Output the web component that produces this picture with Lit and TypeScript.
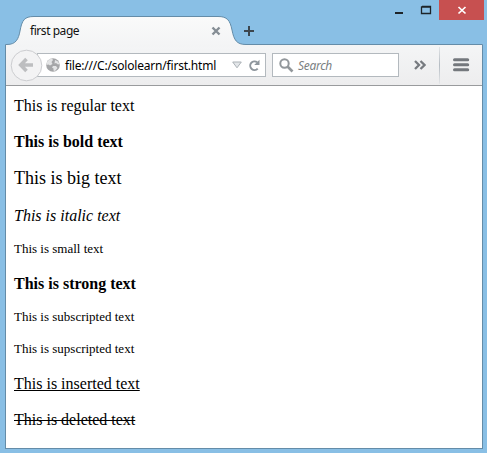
import { LitElement, html, css } from "lit";
import { customElement } from "lit/decorators.js";

@customElement("browser-tabs")
class BrowserTabs extends LitElement {
  static styles = css`
    :host { display: block; position: relative; height: 45px; z-index: 1; }
    .shape { position: absolute; left: 0; top: 0; display: block; }
    .row { position: relative; display: flex; align-items: center; height: 46px; padding: 16px 0 0 30px; box-sizing: border-box; }
    .title { width: 181px; font: 12px/16px "Noto Sans", sans-serif; letter-spacing: -0.45px; color: #111; }
    .plus { margin-left: 23px; }
    .close { flex: none; }
    .controls { position: absolute; right: 3px; top: 0; display: flex; height: 20px; }
    .controls svg { display: block; }
    .exit { background: #c75050; width: 45px; height: 20px; }
  `;
  render() {
    return html`
      <svg class="shape" width="487" height="47" viewBox="0 0 487 47">
        <defs>
          <linearGradient id="tab" x1="0" y1="0" x2="0" y2="1">
            <stop offset="0" stop-color="#fafafa" /><stop offset="1" stop-color="#f3f4f5" />
          </linearGradient>
        </defs>
        <path d="M5.5 47V44.5H7C16 44.5 18.5 39 20 31C22 20 24.500 16.500 34 16.500H218C227 16.500 230 20 232 30C234 40 236.500 44.500 246 44.500H482.500V47Z" fill="url(#tab)" />
        <path d="M5.5 47V44.5H7C16 44.5 18.5 39 20 31C22 20 24.500 16.500 34 16.500H218C227 16.500 230 20 232 30C234 40 236.500 44.500 246 44.500H482.500V47" fill="none" stroke="#648ca8" />
      </svg>
      <div class="row">
        <span class="title">first page</span>
        <svg class="close" width="10" height="10" viewBox="0 0 10 10"><path d="M1.500 1.500L8.500 8.500M8.500 1.500L1.500 8.500" stroke="#858d94" stroke-width="2.400" /></svg>
        <svg class="plus" width="10" height="10" viewBox="0 0 10 10"><path d="M5 0V10M0 5H10" stroke="#3c464e" stroke-width="2" /></svg>
      </div>
      <div class="controls">
        <svg width="44" height="20" viewBox="0 0 44 20"><path d="M0 13H8" stroke="#1d2429" stroke-width="2" /><path d="M27 6.500H35.500V13.500H26.500V6.500M26 7H36" fill="none" stroke="#1d2429" stroke-width="1.300" /></svg>
        <svg class="exit" viewBox="0 0 45 20"><path d="M19.500 7L26.500 13.500M26.500 7L19.500 13.500" stroke="#fff" stroke-width="1.700" /></svg>
      </div>
    `;
  }
}

@customElement("browser-toolbar")
class BrowserToolbar extends LitElement {
  static styles = css`
    :host { display: flex; align-items: center; height: 41px; box-sizing: border-box; border-bottom: 1px solid #999b9d; background: linear-gradient(#f4f5f6, #ededee); font: 12px/16px "Noto Sans", sans-serif; }
    svg { display: block; flex: none; }
    .back { margin-left: 4px; z-index: 1; }
    .field { display: flex; align-items: center; flex: none; height: 24px; box-sizing: border-box; border: 1px solid #b3b9be; background: #fff; }
    .address { width: 229px; margin-left: -6px; padding-left: 8px; }
    .url { flex: none; width: 167px; margin-left: 5px; padding-top: 1px; color: #000; white-space: nowrap; letter-spacing: -0.2px; }
    .reload { margin-left: 6px; }
    .search { width: 127px; margin-left: 6px; padding-left: 6px; }
    .hint { margin-left: 4px; padding-top: 1px; font-style: italic; color: #7b7f83; letter-spacing: -0.3px; }
    .more { margin-left: 15px; }
    .rule { width: 1px; height: 38px; margin-left: 13px; background: linear-gradient(#e4e6e8, #b5bcc3, #e4e6e8); }
    .menu { margin-left: 13px; }
  `;
  render() {
    return html`
      <svg class="back" width="33" height="33" viewBox="0 0 33 33">
        <circle cx="16.500" cy="16.500" r="15.300" fill="#f3f3f4" stroke="#cccdd0" />
        <path d="M10.500 16H23M16.500 10L10.700 16L16.500 22" fill="none" stroke="#bdbec0" stroke-width="3.600" />
      </svg>
      <div class="field address">
        <svg width="14" height="14" viewBox="0 0 14 14">
          <circle cx="7" cy="7" r="6.800" fill="#a5a6a8" />
          <path d="M1 4L3 1.500L6 .5L7 2L5.500 4L6.500 6L4 7.500L2.500 6.500L.5 7ZM9 2L12 3.500L13.500 6L12 6.500L10 5L8.500 5.500ZM7 8L10 8L11.500 10L9 13L7.500 12.500L7.500 10.500L6 9.500Z" fill="#e3e4e5" />
        </svg>
        <span class="url">file:///C:/sololearn/first.html</span>
        <svg width="10" height="8" viewBox="0 0 10 8"><path d="M.7 1H9.300L5 6.800Z" fill="#e3e6e9" stroke="#abb1b6" /></svg>
        <svg class="reload" width="13" height="13" viewBox="0 0 13 13"><path d="M9.700 9.600A4.300 4.300 0 1 1 9.200 3.300" fill="none" stroke="#8e969d" stroke-width="2" /><path d="M11.500 .8V6H6.200Z" fill="#8e969d" /></svg>
      </div>
      <div class="field search">
        <svg width="15" height="15" viewBox="0 0 15 15"><circle cx="5.500" cy="5.500" r="4.200" fill="none" stroke="#92979b" stroke-width="2" /><path d="M8.500 8.500L13.500 13.500" stroke="#92979b" stroke-width="2.600" /></svg>
        <span class="hint">Search</span>
      </div>
      <svg class="more" width="12" height="10" viewBox="0 0 12 10"><path d="M1 1L5 5L1 9M6.500 1L10.500 5L6.500 9" fill="none" stroke="#777b80" stroke-width="2.300" /></svg>
      <div class="rule"></div>
      <svg class="menu" width="17" height="14" viewBox="0 0 17 14"><path d="M1.500 1.700H14.700M1.500 6.700H14.700M1.500 11.700H14.700" stroke="#74787d" stroke-width="3" stroke-linecap="round" /></svg>
    `;
  }
}

@customElement("app-root")
class AppRoot extends LitElement {
  static styles = css`
    :host { display: block; width: 487px; height: 453px; background: #89bfe5; overflow: hidden; }
    .window { margin: 0 4px 0 5px; height: 404px; box-sizing: border-box; border: 1px solid #648ca8; border-top: 0; background: #fff; }
    .page { padding: 10px 0 0 8px; font: 16px/20px "Liberation Serif", serif; color: #000; }
    p { margin: 0 0 16px; height: 20px; white-space: nowrap; }
    .bold { font-weight: bold; }
    .big { font-size: 18px; margin-bottom: 18px; }
    .italic { font-style: italic; margin-bottom: 13px; }
    .small { font-size: 13px; margin-bottom: 15px; }
    .strong { font-weight: bold; margin-bottom: 13px; }
    .sub { margin-bottom: 12px; }
    .inserted { text-decoration: underline; }
    .deleted { text-decoration: line-through; }
  `;
  render() {
    return html`
      <browser-tabs></browser-tabs>
      <div class="window">
        <browser-toolbar></browser-toolbar>
        <div class="page">
          <p>This is regular text</p>
          <p class="bold">This is bold text</p>
          <p class="big">This is big text</p>
          <p class="italic">This is italic text</p>
          <p class="small">This is small text</p>
          <p class="strong">This is strong text</p>
          <p class="small sub">This is subscripted text</p>
          <p class="small">This is supscripted text</p>
          <p class="inserted">This is inserted text</p>
          <p class="deleted">This is deleted text</p>
        </div>
      </div>
    `;
  }
}
